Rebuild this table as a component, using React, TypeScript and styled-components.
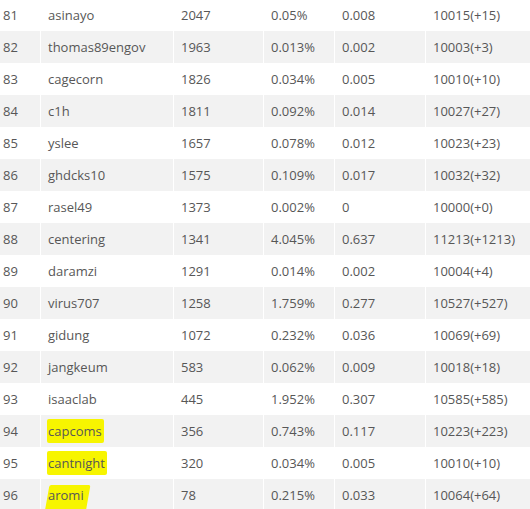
import styled, { createGlobalStyle } from "styled-components";

const Global = createGlobalStyle`
  html, body {
    margin: 0;
    padding: 0;
    background: #fff;
  }
  body {
    font-family: "Open Sans", "Noto Sans", sans-serif;
  }
`;

type Row = {
  rank: number;
  name: string;
  score: number;
  rate: string;
  ratio: string;
  rating: string;
  mark?: "plain" | "slant";
};

const rows: Row[] = [
  { rank: 81, name: "asinayo", score: 2047, rate: "0.05%", ratio: "0.008", rating: "10015(+15)" },
  { rank: 82, name: "thomas89engov", score: 1963, rate: "0.013%", ratio: "0.002", rating: "10003(+3)" },
  { rank: 83, name: "cagecorn", score: 1826, rate: "0.034%", ratio: "0.005", rating: "10010(+10)" },
  { rank: 84, name: "c1h", score: 1811, rate: "0.092%", ratio: "0.014", rating: "10027(+27)" },
  { rank: 85, name: "yslee", score: 1657, rate: "0.078%", ratio: "0.012", rating: "10023(+23)" },
  { rank: 86, name: "ghdcks10", score: 1575, rate: "0.109%", ratio: "0.017", rating: "10032(+32)" },
  { rank: 87, name: "rasel49", score: 1373, rate: "0.002%", ratio: "0", rating: "10000(+0)" },
  { rank: 88, name: "centering", score: 1341, rate: "4.045%", ratio: "0.637", rating: "11213(+1213)" },
  { rank: 89, name: "daramzi", score: 1291, rate: "0.014%", ratio: "0.002", rating: "10004(+4)" },
  { rank: 90, name: "virus707", score: 1258, rate: "1.759%", ratio: "0.277", rating: "10527(+527)" },
  { rank: 91, name: "gidung", score: 1072, rate: "0.232%", ratio: "0.036", rating: "10069(+69)" },
  { rank: 92, name: "jangkeum", score: 583, rate: "0.062%", ratio: "0.009", rating: "10018(+18)" },
  { rank: 93, name: "isaaclab", score: 445, rate: "1.952%", ratio: "0.307", rating: "10585(+585)" },
  { rank: 94, name: "capcoms", score: 356, rate: "0.743%", ratio: "0.117", rating: "10223(+223)", mark: "plain" },
  { rank: 95, name: "cantnight", score: 320, rate: "0.034%", ratio: "0.005", rating: "10010(+10)", mark: "plain" },
  { rank: 96, name: "aromi", score: 78, rate: "0.215%", ratio: "0.033", rating: "10064(+64)", mark: "slant" },
];

const Table = styled.div`
  margin-top: -1px;
  width: 530px;
  display: grid;
  grid-template-columns: 41px 133px 90px 71px 91px 1fr;
  color: #575757;
  font-size: 13px;
`;

const Line = styled.div<{ $shaded: boolean }>`
  display: contents;
  & > div {
    background: ${(p) => (p.$shaded ? "#f2f2f2" : "#fff")};
  }
`;

const Cell = styled.div<{ $first?: boolean }>`
  height: 32px;
  display: flex;
  align-items: center;
  padding-left: ${(p) => (p.$first ? "3px" : "7px")};
  border-right: 1px solid #fff;
  white-space: nowrap;
  &:last-child {
    border-right: none;
  }
`;

const Mark = styled.span<{ $kind: "plain" | "slant" }>`
  position: relative;
  z-index: 0;
  &::before {
    content: "";
    position: absolute;
    z-index: -1;
    background: #f7f500;
    left: -1px;
    right: ${(p) => (p.$kind === "slant" ? "-4px" : "-2px")};
    top: ${(p) => (p.$kind === "slant" ? "-1px" : "-3px")};
    bottom: ${(p) => (p.$kind === "slant" ? "-9px" : "-3px")};
    transform: ${(p) => (p.$kind === "slant" ? "skewX(-10deg)" : "none")};
    border-radius: 2px;
  }
`;

export default function App() {
  return (
    <>
      <Global />
      <Table>
        {rows.map((r, i) => (
          <Line key={r.rank} $shaded={i % 2 === 1}>
            <Cell $first>{r.rank}</Cell>
            <Cell>{r.mark ? <Mark $kind={r.mark}>{r.name}</Mark> : r.name}</Cell>
            <Cell>{r.score}</Cell>
            <Cell>{r.rate}</Cell>
            <Cell>{r.ratio}</Cell>
            <Cell>{r.rating}</Cell>
          </Line>
        ))}
      </Table>
    </>
  );
}
